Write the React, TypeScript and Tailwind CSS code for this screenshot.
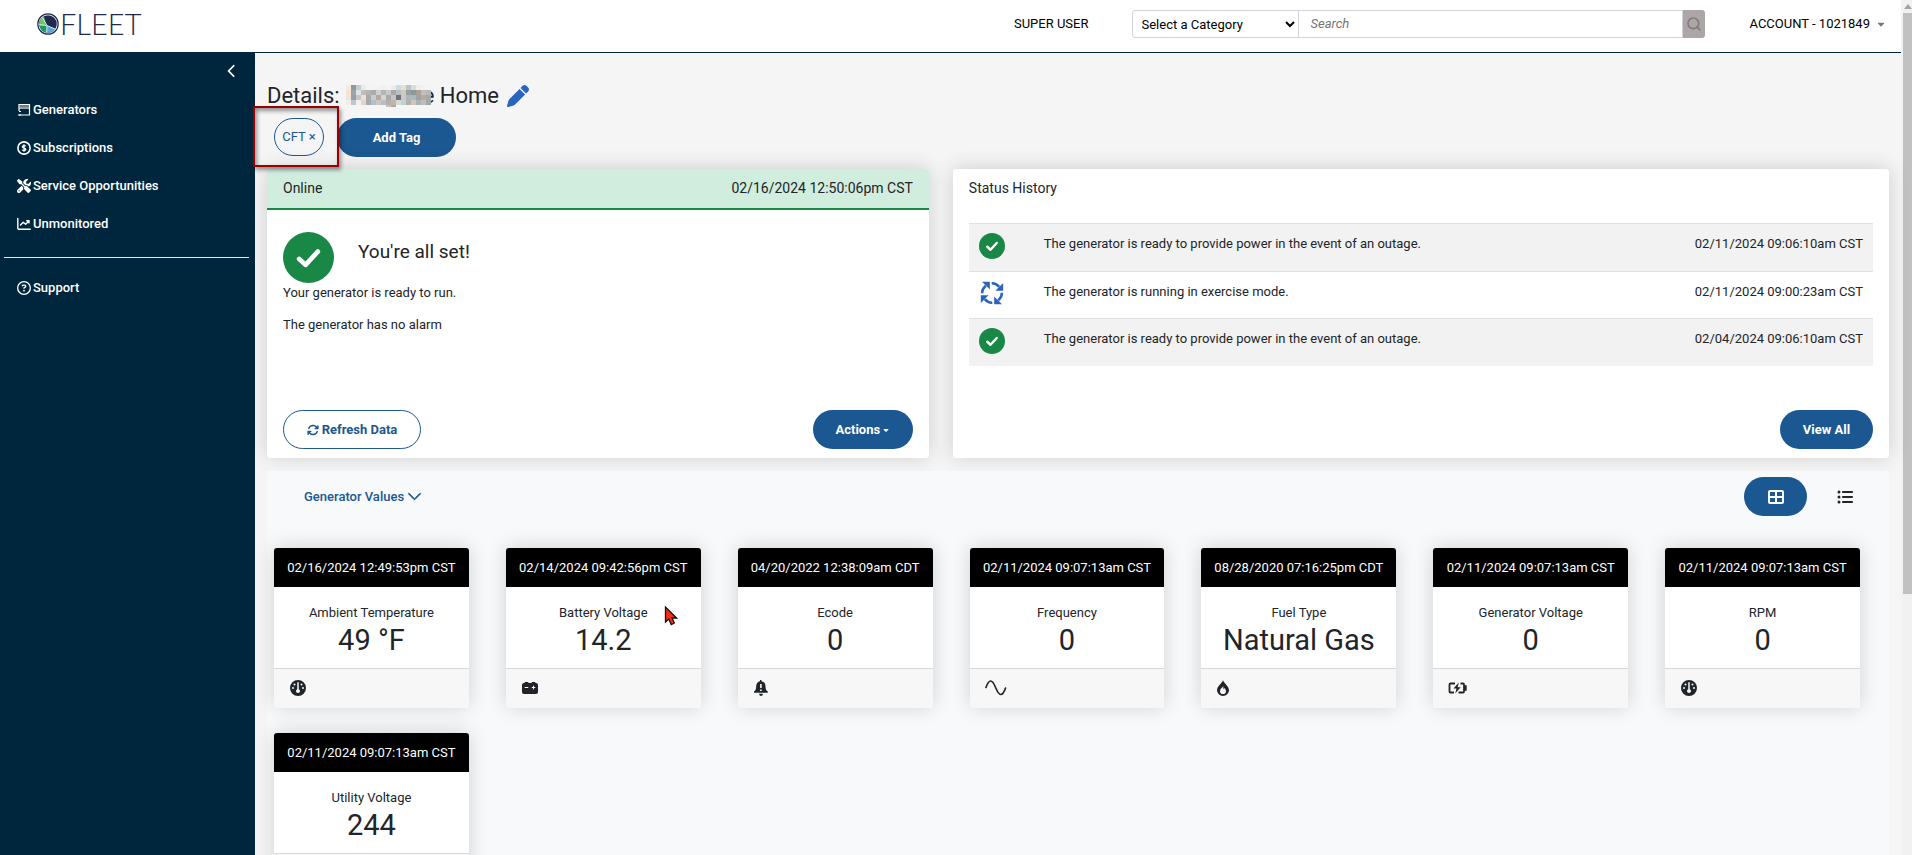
import React from "react";
import {
  FaChevronLeft,
  FaScrewdriverWrench,
  FaRegCircleQuestion,
  FaArrowsRotate,
  FaPen,
  FaGauge,
  FaCarBattery,
  FaTableCellsLarge,
  FaListUl,
  FaCaretDown,
} from "react-icons/fa6";
import { BsChevronDown } from "react-icons/bs";
import { Search } from "lucide-react";

const LogoMark = () => (
  <svg viewBox="0 0 22 22" className="size-[22px]" aria-hidden="true">
    <circle cx="11" cy="11" r="10.2" fill="#fff" stroke="#1f2a4d" strokeWidth="1.2" />
    <clipPath id="mark">
      <circle cx="11" cy="11" r="8.8" />
    </clipPath>
    <g clipPath="url(#mark)">
      <rect width="22" height="22" fill="#1f2a4d" />
      <path d="M6 0 0 8v14h9.5L10 13Z" fill="#1d9a6c" />
      <path d="M6 2 0 8v5l9-1Z" fill="#72c36c" />
      <path d="M10 12.5 9.5 22H20l-.5-6Z" fill="#5aa5dc" />
      <path d="M4.500 3 10 12.500l10 4.500M10 12.500 9.500 21M9.500 12.500 1 11.500" stroke="#fff" strokeWidth="0.8" fill="none" />
    </g>
  </svg>
);

const GeneratorIcon = () => (
  <svg viewBox="0 0 14 14" className="size-[14px]" aria-hidden="true">
    <path d="M2 8V1.500h10.500v10.500H2" fill="none" stroke="#fff" strokeWidth="1.200" />
    <path d="M2.600 2.100h9.300v2.400H2.600z" fill="#fff" opacity="0.450" />
    <path d="M2 5.100h10.500M1 12h3M2 8.500h2" stroke="#fff" />
  </svg>
);

const DollarIcon = () => (
  <svg viewBox="0 0 14 14" className="size-[14px]" fill="none" stroke="#fff" aria-hidden="true">
    <circle cx="7" cy="7" r="6.100" strokeWidth="1.600" />
    <path d="M8.800 5.200C8.300 4.500 5.300 4.200 5.300 5.700S8.800 6.900 8.800 8.400 5.600 9.600 5.100 8.700M7 3.300v7.400" strokeWidth="1.300" />
  </svg>
);

const ChartIcon = () => (
  <svg viewBox="0 0 14 14" className="size-[14px]" fill="none" stroke="#fff" strokeWidth="1.400" strokeLinecap="round" strokeLinejoin="round" aria-hidden="true">
    <path d="M.8 1.500v9.700q0 1 1 1h11.400" />
    <path d="m3.500 8 2.700-2.800 2.500 2 3-3.200M9.800 3.700h2.200v2.200" />
  </svg>
);

const CheckCircle = ({ className }: { className: string }) => (
  <svg viewBox="0 0 52 52" className={className} aria-hidden="true">
    <circle cx="26" cy="26" r="26" fill="#198745" />
    <path d="m16.500 27.500 6.500 6L35.500 20" fill="none" stroke="#fff" strokeWidth="4.800" strokeLinecap="round" strokeLinejoin="round" />
  </svg>
);

const ExerciseIcon = () => (
  <svg viewBox="0 0 24 24" className="ml-px size-6" aria-hidden="true">
    {[0, 90, 180, 270].map((angle) => (
      <g key={angle} transform={`rotate(${angle} 12 12)`}>
        <path d="M2 .8h7.800v7.800Z" fill="#2b64bf" />
        <path d="M2.200 12.300Q2 8 5.800 4.800" fill="none" stroke="#2b64bf" strokeWidth="2.600" />
      </g>
    ))}
  </svg>
);

const BellAlertIcon = () => (
  <svg viewBox="0 0 16 16" className="-ml-px size-4" aria-hidden="true">
    <path
      fillRule="evenodd"
      fill="#212529"
      d="M7 0h1.500v1.200C11 1.600 12.500 3.700 12.500 6.200c0 3 .9 4.300 2.300 5.300v1.200H1v-1.200c1.300-1 2.200-2.300 2.200-5.300C3.200 3.700 4.600 1.600 7 1.200ZM7.100 4v4h1.600V4ZM7 9.400v1.700h1.700V9.400ZM6 13.800h4Q9.700 16 8 16t-2-2.200Z"
    />
  </svg>
);

const SineIcon = () => (
  <svg viewBox="0 0 22 16" className="-ml-px h-4 w-[22px]" fill="none" stroke="#212529" strokeWidth="1.700" strokeLinecap="round" aria-hidden="true">
    <path d="M1 7.500C2.500 3 4 1 5.800 1c4.200 0 5.600 13.500 9.800 13.500 2 0 3.500-2 4.900-6.500" />
  </svg>
);

const FuelIcon = () => (
  <svg viewBox="0 0 12 16" className="h-4 w-3" aria-hidden="true">
    <path
      fillRule="evenodd"
      fill="#212529"
      d="M6 0C6.600 3 12 6 12 10.300A6 5.700 0 0 1 0 10.300C0 6 5.400 3 6 0ZM6.200 6C5.600 7.600 3 8.800 3 11.200a3 2.800 0 0 0 6 0c0-1.500-.9-2.300-1.600-3.200l-1 1.200Z"
    />
  </svg>
);

const ChargeIcon = () => (
  <svg viewBox="0 0 20 16" className="-ml-px h-4 w-5" aria-hidden="true">
    <path d="M7 3.500H2.500q-1 0-1 1v7q0 1 1 1H6M12.500 3.500H15q1 0 1 1v7q0 1-1 1h-4.500M16.500 6.200h1.300v3.600h-1.300" fill="none" stroke="#212529" strokeWidth="1.800" />
    <path d="m10.800 2.500-5.300 6h3L7.200 13.500l5.500-6.200h-3Z" fill="#212529" />
  </svg>
);

const mosaic: string[][] = [
  ["#f6e9df", "#8e9a9f", "#c5ccd0", "#e9eaec", "#f3f3f3", "#f3f3f3", "#f3f3f3", "#f0f0f0", "#f3f3f3", "#ececec", "#c9dbe3", "#e5dfcf", "#bdc3c5", "#d9dddd", "#f1efed", "#f3f3f3", "#f3f3f3"],
  ["#f4e2d2", "#9aa5ab", "#dfe3e5", "#c2bcb8", "#b4b4b4", "#a6adb2", "#d5cfcc", "#b5b5b5", "#c8c8c8", "#a8a8a8", "#b9bfc1", "#cdc9be", "#96a0a4", "#8d989a", "#ab9f96", "#c2beb9", "#b5babd"],
  ["#efe5df", "#94a0a9", "#c6c6c6", "#eedfcf", "#a9a9a9", "#c3cfd6", "#b5a99f", "#d4d4d4", "#a9a9a9", "#c5c5c5", "#70707e", "#c9c9c9", "#b4b4b4", "#a6bac2", "#9fa3a4", "#b6aba2", "#a8a8a8"],
  ["#f4eee9", "#bcc8ce", "#f0f0f0", "#d8d8d8", "#a9a9a9", "#b5c0c6", "#c7c7c7", "#bdbdbd", "#b0b0b0", "#c5b5a5", "#dadada", "#c2d0d6", "#b0b0b0", "#d1c6b7", "#a9b1b3", "#bdbdbd", "#a3a8ab"],
];

const RedactedName = () => (
  <svg viewBox="0 0 85 22" className="relative z-10 -mr-2 ml-1.5 h-[22px] w-[85px]" shapeRendering="crispEdges" aria-hidden="true">
    {mosaic.map((row, r) => row.map((fill, c) => <rect key={`${r}-${c}`} x={c * 5} y={r * 5} width="5" height="5" fill={fill} />))}
    <rect x="40" y="20" width="5" height="2" fill="#cdbfb5" />
    <rect x="45" y="20" width="5" height="2" fill="#a9abb0" />
  </svg>
);

const navItems = [
  { label: "Generators", icon: <GeneratorIcon /> },
  { label: "Subscriptions", icon: <DollarIcon /> },
  { label: "Service Opportunities", icon: <FaScrewdriverWrench className="size-[14px]" /> },
  { label: "Unmonitored", icon: <ChartIcon /> },
];

const history = [
  { ok: true, text: "The generator is ready to provide power in the event of an outage.", date: "02/11/2024 09:06:10am CST" },
  { ok: false, text: "The generator is running in exercise mode.", date: "02/11/2024 09:00:23am CST" },
  { ok: true, text: "The generator is ready to provide power in the event of an outage.", date: "02/04/2024 09:06:10am CST" },
];

const gauge = <FaGauge className="size-4" />;

const values = [
  { date: "02/16/2024 12:49:53pm CST", label: "Ambient Temperature", value: "49 °F", icon: gauge },
  { date: "02/14/2024 09:42:56pm CST", label: "Battery Voltage", value: "14.2", icon: <FaCarBattery className="size-4" /> },
  { date: "04/20/2022 12:38:09am CDT", label: "Ecode", value: "0", icon: <BellAlertIcon /> },
  { date: "02/11/2024 09:07:13am CST", label: "Frequency", value: "0", icon: <SineIcon /> },
  { date: "08/28/2020 07:16:25pm CDT", label: "Fuel Type", value: "Natural Gas", icon: <FuelIcon /> },
  { date: "02/11/2024 09:07:13am CST", label: "Generator Voltage", value: "0", icon: <ChargeIcon /> },
  { date: "02/11/2024 09:07:13am CST", label: "RPM", value: "0", icon: gauge },
  { date: "02/11/2024 09:07:13am CST", label: "Utility Voltage", value: "244", icon: gauge },
];

const solidButton = "flex h-[39px] items-center justify-center rounded-[20px] bg-[#1b5790] font-bold text-white";
const cardShadow = "shadow-[0_-1px_20px_rgba(0,0,0,0.16)]";

function Header() {
  return (
    <header className="flex h-[53px] shrink-0 items-center border-b border-[#00263e] bg-white pb-1 pl-[37px] pr-[15px] text-black">
      <a href="#home" className="flex items-center gap-px font-['Lato',sans-serif] text-[29px] font-light leading-7 text-[#1f2a4d]">
        <LogoMark />
        FLEET
      </a>
      <a href="#user" className="ml-auto mr-[43px]">SUPER USER</a>
      <form className="flex h-7" onSubmit={(e) => e.preventDefault()}>
        <select aria-label="Category" className="w-[167px] rounded-l-[3px] border border-[#ced4da] bg-white pl-[5px] text-black">
          <option>Select a Category</option>
        </select>
        <input
          aria-label="Search"
          placeholder="Search"
          className="w-[384px] border border-l-0 border-[#ced4da] bg-white px-3 placeholder:italic placeholder:text-[#757575]"
        />
        <button type="submit" aria-label="Run search" className="flex w-[22px] items-center justify-center rounded-r-[3px] bg-[#aca7a6] text-[#807b7a]">
          <Search className="size-4" strokeWidth={2.5} />
        </button>
      </form>
      <button type="button" className="ml-[45px] flex items-center gap-1.5">
        ACCOUNT - 1021849
        <FaCaretDown className="size-2.5 text-[#777]" />
      </button>
    </header>
  );
}

function Sidebar() {
  return (
    <nav className="flex w-[255px] shrink-0 flex-col bg-[#00263e] font-medium text-white">
      <button type="button" aria-label="Collapse menu" className="ml-auto mr-4 mt-[11px] flex size-3.5 items-center justify-center">
        <FaChevronLeft className="size-3.5" />
      </button>
      <ul className="mt-[13px]">
        {navItems.map((item) => (
          <li key={item.label}>
            <a href="#nav" className="flex h-[38px] items-center gap-0.5 pl-[17px]">
              {item.icon}
              {item.label}
            </a>
          </li>
        ))}
      </ul>
      <hr className="ml-1 mr-1.5 mt-3.5 border-t border-[#e2e8ec]" />
      <a href="#support" className="mt-[11px] flex h-[38px] items-center gap-0.5 pl-[17px]">
        <FaRegCircleQuestion className="size-3.5" />
        Support
      </a>
    </nav>
  );
}

function StatusCard() {
  return (
    <section className={`col-span-5 flex flex-col rounded-[3px] bg-white ${cardShadow}`}>
      <div className="flex h-[41px] items-center justify-between rounded-t-[3px] border-b-2 border-[#198745] bg-[#d1eddd] px-4 pb-0.5 text-[14px]">
        <span>Online</span>
        <span>02/16/2024 12:50:06pm CST</span>
      </div>
      <div className="px-4 pt-[22px]">
        <div className="flex items-start gap-6">
          <CheckCircle className="size-[51px]" />
          <h2 className="pt-2 text-[19px] leading-6">You're all set!</h2>
        </div>
        <p className="leading-5">Your generator is ready to run.</p>
        <p className="mt-3 leading-5">The generator has no alarm</p>
      </div>
      <div className="mt-auto flex justify-between px-4 pb-[9px]">
        <button type="button" className="flex h-[39px] w-[138px] items-center justify-center gap-[3px] rounded-[20px] border border-[#1b5790] bg-white font-bold text-[#1b5790]">
          <FaArrowsRotate className="size-3" />
          Refresh Data
        </button>
        <button type="button" className={`${solidButton} w-[100px] gap-0.5`}>
          Actions
          <FaCaretDown className="size-2" />
        </button>
      </div>
    </section>
  );
}

function HistoryCard() {
  return (
    <section className={`col-span-7 flex flex-col rounded-[3px] bg-white px-4 ${cardShadow}`}>
      <h2 className="flex h-[54px] items-start pt-2 text-[14px] leading-[22px]">Status History</h2>
      <table className="w-full border-collapse">
        <tbody>
          {history.map((row) => (
            <tr key={row.date} className="h-[47px] border-t border-[#dee2e6] first:h-12 odd:bg-[#f2f2f2]">
              <td className="w-[75px] pl-[10px] pt-[9px] align-top">
                {row.ok ? <CheckCircle className="size-[26px]" /> : <ExerciseIcon />}
              </td>
              <td className="pt-2.5 align-top leading-5">{row.text}</td>
              <td className="pr-[10px] pt-2.5 text-right align-top leading-5">{row.date}</td>
            </tr>
          ))}
        </tbody>
      </table>
      <div className="mt-auto flex justify-end pb-[9px]">
        <button type="button" className={`${solidButton} w-[93px]`}>View All</button>
      </div>
    </section>
  );
}

function ValueCard({ date, label, value, icon }: (typeof values)[number]) {
  return (
    <article className={`flex flex-col rounded-[3px] bg-white ${cardShadow}`}>
      <div className="flex h-[39px] items-center justify-center whitespace-nowrap rounded-t-[3px] bg-black text-white">{date}</div>
      <div className="flex h-[81px] flex-col items-center pt-4">
        <h3 className="leading-5">{label}</h3>
        <p className="whitespace-nowrap text-[29px] leading-[34px]">{value}</p>
      </div>
      <div className="flex h-10 items-center rounded-b-[3px] border-t border-[#d8d8d8] bg-[#f7f7f7] px-4 pb-0.5">{icon}</div>
    </article>
  );
}

export default function App() {
  return (
    <div className="flex h-screen overflow-hidden bg-[#f5f5f5] font-['Roboto',sans-serif] text-[13px] leading-5 text-[#212529]">
      <div className="flex min-w-0 flex-1 flex-col">
        <Header />
        <div className="flex min-h-0 flex-1">
          <Sidebar />
          <main className="relative flex min-w-0 flex-1 flex-col px-3">
            <div className="mt-[29px] flex h-7 items-center text-[22px] leading-7">
              <h1 className="flex items-center">
                Details:
                <RedactedName />
                e Home
              </h1>
              <button type="button" aria-label="Rename" className="ml-2 text-[#2b64bf]">
                <FaPen className="size-[22px]" />
              </button>
            </div>
            <div className="mt-2 flex items-start gap-[13px] pl-[7px]">
              <button type="button" className="flex h-[38px] w-[50px] items-center justify-center rounded-[20px] border border-[#1b5790] text-[#1b5790]">
                CFT ×
              </button>
              <button type="button" className={`${solidButton} w-[119px]`}>Add Tag</button>
            </div>
            <div className="pointer-events-none absolute -left-0.5 top-[53px] z-20 h-[61px] w-[86px] border-2 border-[#990000] shadow-[2px_3px_4px_rgba(0,0,0,0.4),inset_2px_3px_4px_rgba(0,0,0,0.4)]" />

            <div className="mt-3 grid h-[289px] shrink-0 grid-cols-12 gap-6">
              <StatusCard />
              <HistoryCard />
            </div>

            <section className="mt-[13px] flex-1 bg-[#f8f9fb] pb-6">
              <div className="flex items-center justify-between pl-[37px] pr-[29px] pt-1.5">
                <button type="button" className="flex items-center gap-[3px] font-medium text-[#1b5790]">
                  Generator Values
                  <BsChevronDown className="size-[15px]" strokeWidth={0.9} />
                </button>
                <div className="flex">
                  <button type="button" aria-label="Grid view" className={`${solidButton} w-[63px]`}>
                    <FaTableCellsLarge className="size-4" />
                  </button>
                  <button type="button" aria-label="List view" className="ml-[30px] mr-[7px] flex items-center">
                    <FaListUl className="size-4" />
                  </button>
                </div>
              </div>
              <div className="mt-8 grid grid-cols-7 gap-x-[37px] gap-y-[25px] pl-[7px] pr-[29px]">
                {values.map((v) => (
                  <ValueCard key={v.label} {...v} />
                ))}
              </div>
            </section>

            <svg viewBox="0 0 14 22" className="absolute left-[409px] top-[552px] z-20 h-[22px] w-3.5" aria-hidden="true">
              <path d="M1.500 2v15l3.300-3 2.500 5.500 3-1.500L8 13h4.500Z" fill="#ff2a12" stroke="#111" strokeWidth="1.300" />
            </svg>
          </main>
        </div>
      </div>
      <div className="flex w-[11px] shrink-0 flex-col items-end bg-[#f1f1f1]" aria-hidden="true">
        <div className="flex h-[13px] w-[9px] items-center justify-center">
          <svg viewBox="0 0 8 5" className="h-[5px] w-2" fill="#a3a3a3">
            <path d="M4 0 8 5H0Z" />
          </svg>
        </div>
        <div className="h-[68vh] w-[9px] bg-[#c1c1c1]" />
      </div>
    </div>
  );
}
